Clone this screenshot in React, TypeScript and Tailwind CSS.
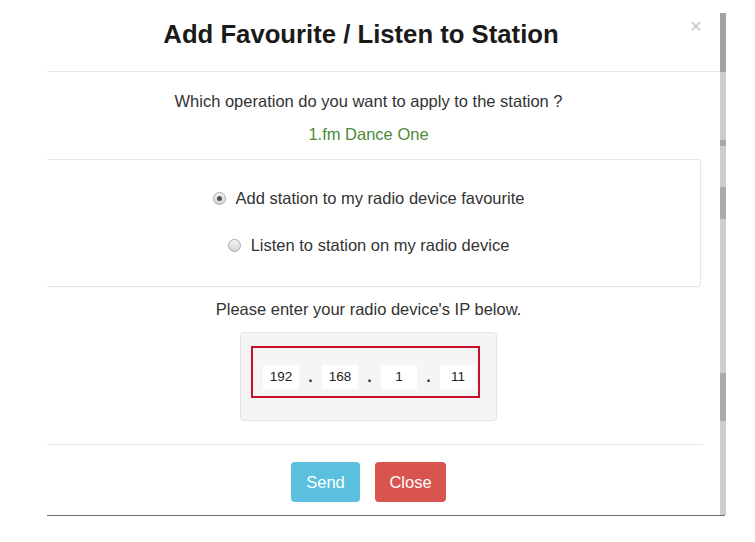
import React from "react";

function Radio({ checked }: { checked: boolean }) {
  return (
    <span className="flex h-[13px] w-[13px] items-center justify-center rounded-full border border-[#a8a8a8] bg-linear-to-b from-[#f4f4f4] to-[#d4d4d4]">
      {checked && <span className="h-[5px] w-[5px] rounded-full bg-[#505050]" />}
    </span>
  );
}

function IpField({ value }: { value: string }) {
  return (
    <div className="flex h-[24px] w-[36px] items-center justify-center bg-white text-[13.5px] text-[#222]">
      {value}
    </div>
  );
}

function Dot() {
  return (
    <div className="flex h-[24px] w-[23px] items-center justify-center text-[16px] font-bold text-[#333]">
      .
    </div>
  );
}

export default function App() {
  return (
    <div
      className="flex h-[542px] w-[755px] flex-col overflow-hidden bg-white text-[#333]"
      style={{ fontFamily: '"Liberation Sans", Arial, sans-serif' }}
    >
      <div className="flex h-[515px] pl-[47px]">
        <div className="flex w-[673px] flex-col items-start">
          {/* header */}
          <div className="flex h-[72px] w-[673px] items-center border-b border-[#e8e8e8]">
            <div className="w-[628px] pb-[2px] text-center text-[25.7px] font-bold leading-none text-[#1a1a1a]">
              Add Favourite / Listen to Station
            </div>
            <div className="ml-[15px] mb-[20px] text-[20px] leading-none text-[#c4c4c4]">
              ×
            </div>
          </div>

          {/* body */}
          <div className="mt-[19px] w-[643px] text-center text-[16.5px] leading-[20px]">
            Which operation do you want to apply to the station ?
          </div>
          <div className="mt-[13px] w-[643px] text-center text-[16.5px] leading-[20px] text-[#4d8a3a]">
            1.fm Dance One
          </div>

          <div className="mt-[15px] w-[654px] rounded-r-[3px] border-y border-r border-[#e6e6e6] bg-white shadow-[0_1px_1px_rgba(0,0,0,0.03)]">
            <div className="flex w-[643px] flex-col items-center pt-[28px] pb-[31px]">
              <label className="flex h-[20px] items-center gap-[10px] text-[16.5px] leading-[20px]">
                <Radio checked />
                <span>Add station to my radio device favourite</span>
              </label>
              <label className="mt-[27px] flex h-[20px] items-center gap-[10px] text-[16.5px] leading-[20px]">
                <Radio checked={false} />
                <span>Listen to station on my radio device</span>
              </label>
            </div>
          </div>

          <div className="mt-[12px] w-[643px] text-center text-[16.5px] leading-[20px]">
            Please enter your radio device's IP below.
          </div>

          <div className="mt-[13px] flex w-[643px] justify-center">
            <div className="h-[89px] w-[257px] rounded-[4px] border border-[#e3e3e3] bg-[#f5f5f5] pt-[13px] pl-[10px]">
              <div className="flex h-[52px] w-[229px] items-start border-2 border-[#c8102e] pt-[17px] pl-[10px]">
                <IpField value="192" />
                <Dot />
                <IpField value="168" />
                <Dot />
                <IpField value="1" />
                <Dot />
                <IpField value="11" />
              </div>
            </div>
          </div>

          {/* footer */}
          <div className="mt-[23px] h-px w-[656px] bg-[#e8e8e8]" />
          <div className="mt-[17px] flex w-[643px] justify-center gap-[15px]">
            <button className="h-[40px] w-[69px] rounded-[4px] bg-[#5bc0de] text-[16.5px] text-white">
              Send
            </button>
            <button className="h-[40px] w-[71px] rounded-[4px] bg-[#d9534f] text-[16.5px] text-white">
              Close
            </button>
          </div>
        </div>

        {/* scrollbar */}
        <div className="mt-[13px] flex w-[6px] flex-col bg-[#cdcdcd]">
          <div className="h-[59px] bg-[#a2a2a2]" />
          <div className="h-[68px]" />
          <div className="h-[6px] bg-[#a8a8a8]" />
          <div className="h-[41px]" />
          <div className="h-[32px] bg-[#ababab]" />
          <div className="h-[154px]" />
          <div className="h-[48px] bg-[#ababab]" />
        </div>
      </div>
      <div className="ml-[47px] h-px w-[678px] bg-[#707070]" />
    </div>
  );
}
